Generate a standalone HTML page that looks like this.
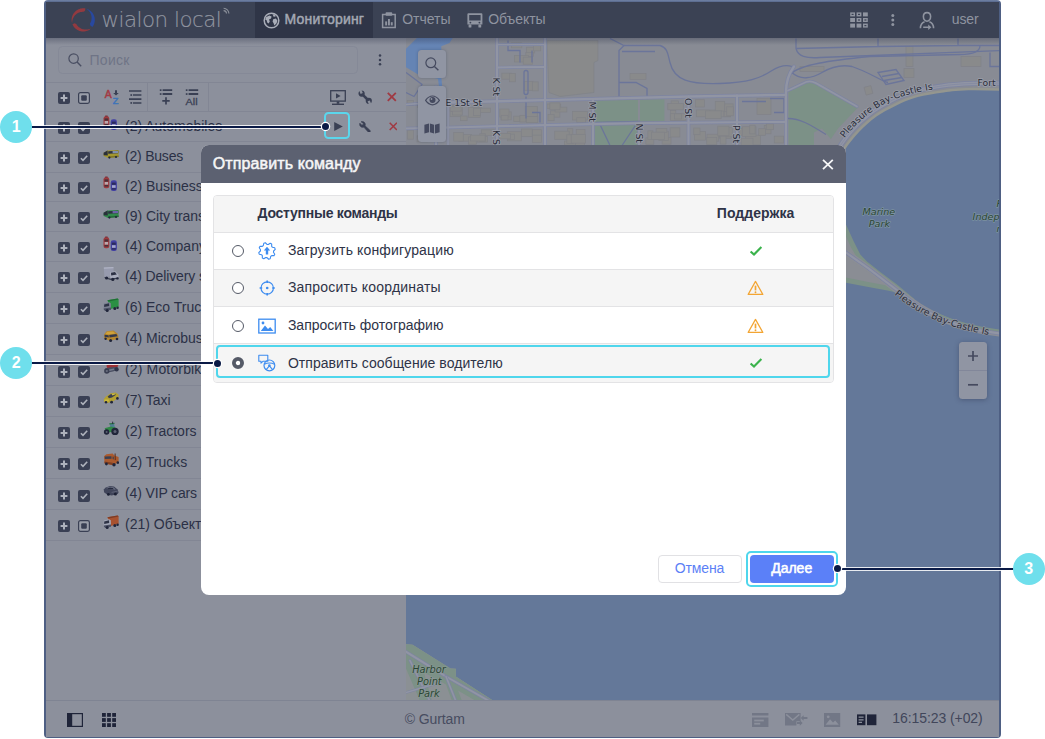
<!DOCTYPE html>
<html lang="ru">
<head>
<meta charset="utf-8">
<title>Отправить команду</title>
<style>
html,body{margin:0;padding:0;background:#fff;}
body{width:1045px;height:739px;position:relative;overflow:hidden;font-family:"Liberation Sans",Arial,sans-serif;font-size:14px;color:#2b3046;}
.abs{position:absolute;}
#win{position:absolute;left:44px;top:0;width:956.9px;height:738px;background:linear-gradient(#7183a6 0,#4e5f83 2.6px);border-radius:4px;overflow:hidden;}
#hdr{position:absolute;left:46px;top:2px;width:953.3px;height:35.5px;background:#3b4254;}
#tabact{position:absolute;left:254.5px;top:2px;width:118.5px;height:35.5px;background:#2f3547;}
.ht{position:absolute;top:10px;height:18px;line-height:18px;font-size:14px;color:#8f94a0;white-space:pre;}
#panel{position:absolute;left:46px;top:37.5px;width:360px;height:663px;background:#8c909c;}
.hl{position:absolute;left:46px;width:360px;height:1px;background:#828694;}
.vl{position:absolute;width:1px;background:#828694;}
.row{position:absolute;left:46px;width:360px;}
.rt{position:absolute;left:125px;height:18px;line-height:18px;font-size:14px;color:#2b3046;white-space:pre;}
#status{position:absolute;left:46px;top:700.5px;width:953.3px;height:36px;background:#8c909c;}
#statusline{position:absolute;left:46px;top:700px;width:953.3px;height:1px;background:#7f8493;}
#map{position:absolute;left:406px;top:37.5px;}
.mbtn{position:absolute;background:#9095a3;border-radius:3.5px;box-shadow:0 0 3px rgba(40,48,75,.35);}
#dlg{position:absolute;left:201px;top:145px;width:645px;height:449.5px;background:#fff;border-radius:8px;overflow:hidden;}
#dlgh{position:absolute;left:0;top:0;width:645px;height:37.7px;background:#5c6171;}
#tbl{position:absolute;left:11.9px;top:50.2px;width:620.9px;height:187.4px;border:1px solid #e3e3e5;border-radius:4px;box-sizing:border-box;background:#fff;overflow:hidden;}
.tr{position:absolute;left:0;width:619px;}
.ct{position:absolute;height:18px;line-height:18px;font-size:14px;color:#2e3347;white-space:pre;}
.radio{position:absolute;width:12px;height:12px;box-sizing:border-box;border:1.5px solid #555a67;border-radius:50%;background:#fff;}
.callc{position:absolute;width:32px;height:32px;border-radius:50%;background:#6fdfec;color:#fff;font-weight:bold;font-size:16px;line-height:32px;text-align:center;}
.calll{position:absolute;height:2.4px;background:#0a1a46;box-shadow:0 0 0 1px rgba(255,255,255,.85);}
.calld{position:absolute;width:7px;height:7px;border-radius:50%;background:#0a1a46;box-shadow:0 0 0 1.2px #fff;}
</style>
</head>
<body>
<div id="win"></div>
<div id="hdr"></div>
<div id="tabact"></div>
<svg class="abs" style="left:68px;top:4px" width="32" height="32" viewBox="68 4 32 32">
<path d="M72.11,23.29 L71.86,22.33 L71.69,21.35 L71.61,20.36 L71.61,19.36 L71.70,18.37 L71.87,17.39 L72.13,16.43 L72.47,15.49 L72.89,14.59 L73.38,13.72 L73.95,12.91 L74.58,12.14 L75.28,11.43 L76.03,10.78 L76.84,10.20 L77.69,9.69 L78.59,9.26 L79.52,8.90 L80.48,8.62 L81.45,8.43 L82.44,8.32 L83.44,8.30 L84.43,8.37 L85.41,8.51 L84.97,10.81 L84.10,11.43 L83.36,11.87 L82.67,11.85 L81.98,11.88 L81.28,11.96 L80.58,12.08 L79.89,12.25 L79.20,12.47 L78.51,12.75 L77.84,13.08 L77.18,13.46 L76.54,13.90 L75.92,14.40 L75.33,14.95 L74.77,15.56 L74.25,16.23 L73.78,16.95 L73.36,17.72 L72.99,18.54 L72.68,19.41 L72.44,20.32 L72.26,21.28 L72.16,22.26 L72.11,23.29Z" fill="#923a40"/>
<path d="M86.59,8.81 L87.47,9.12 L88.33,9.50 L89.15,9.94 L89.94,10.46 L90.68,11.03 L91.37,11.66 L92.00,12.35 L92.58,13.08 L93.10,13.86 L93.56,14.68 L93.95,15.53 L94.26,16.41 L94.51,17.32 L94.68,18.24 L94.78,19.17 L94.80,20.10 L94.74,21.04 L94.61,21.96 L94.41,22.88 L94.13,23.77 L93.79,24.64 L93.37,25.48 L92.89,26.28 L92.34,27.04 L90.34,25.48 L90.10,24.44 L89.98,23.62 L90.29,23.07 L90.57,22.51 L90.82,21.92 L91.04,21.32 L91.23,20.69 L91.37,20.04 L91.48,19.38 L91.55,18.69 L91.57,17.99 L91.54,17.27 L91.46,16.54 L91.33,15.80 L91.14,15.06 L90.89,14.31 L90.58,13.57 L90.21,12.83 L89.77,12.10 L89.27,11.40 L88.69,10.71 L88.05,10.06 L87.35,9.43 L86.59,8.81Z" fill="#28489f"/>
<path d="M91.26,28.24 L90.55,28.87 L89.80,29.44 L89.00,29.95 L88.16,30.38 L87.29,30.75 L86.40,31.05 L85.48,31.27 L84.55,31.42 L83.60,31.49 L82.66,31.49 L81.72,31.41 L80.79,31.25 L79.87,31.01 L78.98,30.71 L78.11,30.33 L77.28,29.88 L76.49,29.36 L75.74,28.79 L75.05,28.15 L74.40,27.46 L73.82,26.72 L73.29,25.93 L72.83,25.11 L72.44,24.25 L74.61,23.37 L75.59,23.72 L76.34,24.07 L76.68,24.64 L77.05,25.19 L77.45,25.71 L77.90,26.22 L78.38,26.70 L78.90,27.16 L79.45,27.59 L80.04,27.98 L80.67,28.34 L81.34,28.67 L82.04,28.95 L82.77,29.19 L83.53,29.37 L84.32,29.51 L85.14,29.58 L85.98,29.59 L86.84,29.54 L87.71,29.42 L88.59,29.23 L89.47,28.97 L90.36,28.63 L91.26,28.24Z" fill="#923a40"/>
</svg>
<div class="abs" style="left:101.5px;top:6.4px;height:28px;line-height:28px;-webkit-text-stroke:0.14px #9195a0;font-family:'DejaVu Sans Light','DejaVu Sans','Liberation Sans',sans-serif;font-weight:200;font-size:21.4px;letter-spacing:-0.5px;color:#9195a0;white-space:pre;">wialon local</div>
<svg class="abs" style="left:222px;top:6px" width="10" height="10" viewBox="0 0 10 10"><path d="M1.6 2.2 A5.4 5.4 0 0 1 6.9 7.6" fill="none" stroke="#8a8f99" stroke-width="1.1"/><path d="M1.6 4.6 A3 3 0 0 1 4.5 7.6" fill="none" stroke="#8a8f99" stroke-width="1.1"/></svg>
<svg class="abs" style="left:262.5px;top:11.5px" width="17" height="17" viewBox="0 0 17 17"><circle cx="8.5" cy="8.5" r="7.3" fill="none" stroke="#a9adb8" stroke-width="1.5"/><path d="M3 5.2 L6.2 3.4 L8.6 4.4 L8 6.6 L6 7.4 L6.8 9.4 L5.6 11.6 L4.2 10.4 L3.6 8.2 L2.2 7.4Z M10.2 7.2 L12.8 6.6 L14.4 8.4 L13.6 11.2 L11.4 13.4 L10.6 11.2 L9.6 9.4Z M9.6 2.2 L12.2 2.8 L12.6 4.4 L10.6 4.8Z" fill="#a9adb8"/></svg>
<div class="ht" style="left:284.6px;-webkit-text-stroke:0.45px #a4a8b3;color:#a4a8b3;letter-spacing:0.19px">Мониторинг</div>
<svg class="abs" style="left:381px;top:11px" width="16" height="18" viewBox="0 0 16 18"><path d="M1.6 3.4 H14.2 V16.6 H1.6Z" fill="none" stroke="#8f94a0" stroke-width="1.5"/><rect x="4.6" y="1.2" width="6.6" height="3.6" rx="0.8" fill="#8f94a0"/><rect x="4.2" y="10.4" width="1.9" height="4" fill="#8f94a0"/><rect x="7" y="8" width="1.9" height="6.4" fill="#8f94a0"/><rect x="9.8" y="11.2" width="1.9" height="3.2" fill="#8f94a0"/></svg>
<div class="ht" style="left:402.2px;">Отчеты</div>
<svg class="abs" style="left:466px;top:11px" width="18" height="18" viewBox="0 0 18 18"><path d="M2.4 2.2 H15.4 Q16.4 2.2 16.4 3.2 V13.6 H1.4 V3.2 Q1.4 2.2 2.4 2.2Z M3.2 4 V9.6 H14.6 V4Z" fill="#8f94a0" fill-rule="evenodd"/><rect x="2.6" y="13.4" width="2.8" height="3.2" rx="0.6" fill="#8f94a0"/><rect x="12.4" y="13.4" width="2.8" height="3.2" rx="0.6" fill="#8f94a0"/><circle cx="4.4" cy="11.6" r="0.9" fill="#3b4254"/><circle cx="13.4" cy="11.6" r="0.9" fill="#3b4254"/></svg>
<div class="ht" style="left:488.2px;letter-spacing:-0.06px">Объекты</div>
<svg class="abs" style="left:850px;top:12px" width="18" height="16" viewBox="0 0 18 16"><rect x="0.9" y="1.1" width="3.4" height="2.6" fill="none" stroke="#8f94a0" stroke-width="1.4"/><rect x="7.3" y="1.1" width="3.4" height="2.6" fill="none" stroke="#8f94a0" stroke-width="1.4"/><rect x="13.0" y="0.4" width="4.8" height="4" fill="#8f94a0"/><rect x="0.2" y="6.0" width="4.8" height="4" fill="#8f94a0"/><rect x="7.3" y="6.7" width="3.4" height="2.6" fill="none" stroke="#8f94a0" stroke-width="1.4"/><rect x="13.7" y="6.7" width="3.4" height="2.6" fill="none" stroke="#8f94a0" stroke-width="1.4"/><rect x="0.2" y="11.6" width="4.8" height="4" fill="#8f94a0"/><rect x="6.6" y="11.6" width="4.8" height="4" fill="#8f94a0"/><rect x="13.7" y="12.3" width="3.4" height="2.6" fill="none" stroke="#8f94a0" stroke-width="1.4"/></svg>
<svg class="abs" style="left:890px;top:13px" width="6" height="14" viewBox="0 0 6 14"><circle cx="2.8" cy="2.6" r="1.5" fill="#8f94a0"/><circle cx="2.8" cy="7" r="1.5" fill="#8f94a0"/><circle cx="2.8" cy="11.4" r="1.5" fill="#8f94a0"/></svg>
<svg class="abs" style="left:918px;top:11px" width="18" height="20" viewBox="0 0 18 20"><path d="M9 1.6 C11.4 1.6 12.6 3.4 12.6 5.6 C12.6 8.2 11 10.2 9 10.2 C7 10.2 5.4 8.2 5.4 5.6 C5.4 3.4 6.6 1.6 9 1.6Z" fill="none" stroke="#8f94a0" stroke-width="1.6"/><path d="M2.4 17.2 C2.6 13.6 4.2 11.6 6.6 10.8 M11.4 10.8 C13.8 11.6 15.4 13.6 15.6 17.2" fill="none" stroke="#8f94a0" stroke-width="1.6"/><path d="M5.2 15.6 H10.2 V13.6 L13.4 16.3 L10.2 19 V17 H5.2Z" fill="#8f94a0"/></svg>
<div class="ht" style="left:951.8px;letter-spacing:-0.13px">user</div>
<div id="panel"></div>
<div class="abs" style="left:58px;top:46px;width:299.5px;height:27.6px;box-sizing:border-box;border:1px solid #858997;border-radius:4.5px;background:#8c909c"></div>
<svg class="abs" style="left:67px;top:52px" width="16" height="16" viewBox="0 0 16 16"><circle cx="6.6" cy="6.6" r="4.7" fill="none" stroke="#494e62" stroke-width="1.2"/><path d="M10.1 10.1L14.2 14.2" stroke="#494e62" stroke-width="1.4"/></svg>
<div class="abs" style="left:89.5px;top:51px;height:18px;line-height:18px;font-size:14px;color:#6f7486;letter-spacing:0.28px;white-space:pre">Поиск</div>
<svg class="abs" style="left:377px;top:53px" width="6" height="14" viewBox="0 0 6 14"><circle cx="3" cy="2.6" r="1.25" fill="#3a4054"/><circle cx="3" cy="6.9" r="1.25" fill="#3a4054"/><circle cx="3" cy="11.2" r="1.25" fill="#3a4054"/></svg>
<div class="hl" style="top:82px"></div>
<div class="vl" style="left:147.2px;top:82.5px;height:28.5px"></div>
<div class="vl" style="left:208.3px;top:82.5px;height:28.5px"></div>
<svg class="abs" style="left:58px;top:92px" width="12" height="12" viewBox="0 0 12 12"><rect width="12" height="12" rx="2" fill="#3a4054"/><path d="M6 2.6V9.4M2.6 6H9.4" stroke="#aeb2bc" stroke-width="2"/></svg>
<svg class="abs" style="left:78px;top:92px" width="12" height="12" viewBox="0 0 12 12"><rect x="0.6" y="0.6" width="10.8" height="10.8" rx="1.8" fill="#9a9ea9" stroke="#3a4054" stroke-width="1.2"/><rect x="3.2" y="3.2" width="5.6" height="5.6" rx="1" fill="#3a4054"/></svg>
<svg class="abs" style="left:104px;top:88px" width="16" height="18" viewBox="0 0 16 18"><text x="0.8" y="9.7" font-family="Liberation Sans, sans-serif" font-size="10.4" fill="#a33a44" stroke="#a33a44" stroke-width="0.5">A</text><text x="8.8" y="15.8" font-family="Liberation Sans, sans-serif" font-size="9.2" fill="#3f74b8" stroke="#3f74b8" stroke-width="0.5">Z</text><path d="M11 2.2H13V5H14.8L12 7.4L9.2 5H11Z" fill="#3a4054"/></svg>
<svg class="abs" style="left:128px;top:89px" width="14" height="16" viewBox="0 0 14 16"><path d="M1 2.2H13.4M5 6.6H13.4M1 11H13.4M5 15.2H13.4" stroke="#3a4054" stroke-width="1.7" transform="scale(1,0.92)"/><rect x="2.4" y="5.2" width="1.7" height="1.7" fill="#3a4054"/><rect x="2.4" y="13.1" width="1.7" height="1.7" fill="#3a4054"/></svg>
<svg class="abs" style="left:159px;top:88px" width="14" height="18" viewBox="0 0 14 18"><path d="M3.6 2.2H13.2M3.6 6H13.2" stroke="#3a4054" stroke-width="1.8"/><rect x="0.8" y="1.3" width="1.7" height="1.7" fill="#3a4054"/><rect x="0.8" y="5.2" width="1.7" height="1.7" fill="#3a4054"/><path d="M7 9.2V16.6M3.3 12.9H10.7" stroke="#3a4054" stroke-width="1.7"/></svg>
<svg class="abs" style="left:185px;top:88px" width="14" height="18" viewBox="0 0 14 18"><path d="M3.6 2.2H13.2M3.6 6H13.2" stroke="#3a4054" stroke-width="1.8"/><rect x="0.8" y="1.3" width="1.7" height="1.7" fill="#3a4054"/><rect x="0.8" y="5.2" width="1.7" height="1.7" fill="#3a4054"/><text x="0.6" y="16.5" font-family="Liberation Sans, sans-serif" font-size="9.8" fill="#3a4054" stroke="#3a4054" stroke-width="0.3" textLength="12" lengthAdjust="spacingAndGlyphs">All</text></svg>
<svg class="abs" style="left:329px;top:89px" width="18" height="17" viewBox="0 0 18 17"><rect x="1.7" y="1.7" width="14.6" height="10.4" fill="none" stroke="#3a4054" stroke-width="1.3"/><path d="M7 4.2V9.6L11.6 6.9Z" fill="#3a4054"/><path d="M9 12.4V14.8" stroke="#3a4054" stroke-width="2.6"/><path d="M3 15.3H15" stroke="#3a4054" stroke-width="1.4"/></svg>
<svg class="abs" style="left:357.6px;top:89.7px" width="14.4" height="14.4" viewBox="0 0 14 14"><path d="M4 4L10 10" stroke="#3a4054" stroke-width="2.5"/><circle cx="3.5" cy="3.5" r="3" fill="#3a4054"/><circle cx="10.5" cy="10.5" r="3" fill="#3a4054"/><path d="M3.6 3.4L1.9 -0.6" stroke="#8c909c" stroke-width="2.3"/><path d="M10.4 10.6L12.1 14.6" stroke="#8c909c" stroke-width="2.3"/></svg>
<svg class="abs" style="left:387px;top:92.1px" width="9.6" height="9.6" viewBox="0 0 10 10"><path d="M0.8 0.8L9.2 9.2M9.2 0.8L0.8 9.2" stroke="#a03a43" stroke-width="1.88"/></svg>
<div class="hl" style="top:111.1px"></div>
<svg class="abs" style="left:58px;top:121.8px" width="12" height="12" viewBox="0 0 12 12"><rect width="12" height="12" rx="2" fill="#3a4054"/><path d="M6 2.6V9.4M2.6 6H9.4" stroke="#aeb2bc" stroke-width="2"/></svg>
<svg class="abs" style="left:78px;top:121.8px" width="12" height="12" viewBox="0 0 12 12"><rect width="12" height="12" rx="2" fill="#3a4054"/><path d="M2.9 6.2L5 8.3L9.2 3.8" fill="none" stroke="#aeb2bc" stroke-width="1.6"/></svg>
<svg class="abs" style="left:103px;top:115.4px" width="16" height="16" viewBox="0 0 16 16"><rect x="0.5" y="1.3" width="5.8" height="11" rx="2.2" fill="#9e3a3f"/><rect x="1.5" y="3.4" width="3.8" height="2.2" fill="#4a3038"/><rect x="1.7" y="6" width="3.4" height="2.6" fill="#b9a9ae"/><rect x="1.5" y="9" width="3.8" height="1.6" fill="#4a3038"/><rect x="2" y="0.6" width="2.8" height="1.2" rx="0.5" fill="#7d2f36"/><rect x="7.7" y="4.3" width="6.2" height="10.8" rx="2.4" fill="#4240a2"/><rect x="8.8" y="6.6" width="4" height="2.2" fill="#2b2c5c"/><rect x="9" y="9.2" width="3.6" height="2.6" fill="#a6a8cc"/><rect x="8.8" y="12.2" width="4" height="1.4" fill="#2b2c5c"/></svg>
<div class="rt" style="top:116.7px;letter-spacing:0px">(2) Automobiles</div>
<div class="hl" style="top:140.8px"></div>
<svg class="abs" style="left:58px;top:151.9px" width="12" height="12" viewBox="0 0 12 12"><rect width="12" height="12" rx="2" fill="#3a4054"/><path d="M6 2.6V9.4M2.6 6H9.4" stroke="#aeb2bc" stroke-width="2"/></svg>
<svg class="abs" style="left:78px;top:151.9px" width="12" height="12" viewBox="0 0 12 12"><rect width="12" height="12" rx="2" fill="#3a4054"/><path d="M2.9 6.2L5 8.3L9.2 3.8" fill="none" stroke="#aeb2bc" stroke-width="1.6"/></svg>
<svg class="abs" style="left:103px;top:145.5px" width="16" height="16" viewBox="0 0 16 16"><path d="M0.6 6.8 L4.6 4.4 L15.6 4 L15.6 11 L5 12 L0.6 10Z" fill="#a3972f"/><path d="M0.6 6.8 L4.6 4.6 L4.8 9.6 L0.6 9.2Z" fill="#2a2f3a"/><path d="M5.2 5.2 L15.2 4.8 L15.2 7.2 L5.2 7.8Z" fill="#2e3342"/><path d="M9.6 5.1 L15 4.9 L15 6.9 L9.6 7.3Z" fill="#7f8fae"/><path d="M5 10.4 L15.6 9.6 L15.6 11 L5 12Z" fill="#7d7426"/><circle cx="6.4" cy="11.6" r="1.1" fill="#20253a"/><circle cx="13" cy="11" r="1.1" fill="#20253a"/></svg>
<div class="rt" style="top:146.8px;letter-spacing:-0.21px">(2) Buses</div>
<div class="hl" style="top:171.5px"></div>
<svg class="abs" style="left:58px;top:182.2px" width="12" height="12" viewBox="0 0 12 12"><rect width="12" height="12" rx="2" fill="#3a4054"/><path d="M6 2.6V9.4M2.6 6H9.4" stroke="#aeb2bc" stroke-width="2"/></svg>
<svg class="abs" style="left:78px;top:182.2px" width="12" height="12" viewBox="0 0 12 12"><rect width="12" height="12" rx="2" fill="#3a4054"/><path d="M2.9 6.2L5 8.3L9.2 3.8" fill="none" stroke="#aeb2bc" stroke-width="1.6"/></svg>
<svg class="abs" style="left:103px;top:175.8px" width="16" height="16" viewBox="0 0 16 16"><rect x="0.5" y="1.3" width="5.8" height="11" rx="2.2" fill="#9e3a3f"/><rect x="1.5" y="3.4" width="3.8" height="2.2" fill="#4a3038"/><rect x="1.7" y="6" width="3.4" height="2.6" fill="#b9a9ae"/><rect x="1.5" y="9" width="3.8" height="1.6" fill="#4a3038"/><rect x="2" y="0.6" width="2.8" height="1.2" rx="0.5" fill="#7d2f36"/><rect x="7.7" y="4.3" width="6.2" height="10.8" rx="2.4" fill="#4240a2"/><rect x="8.8" y="6.6" width="4" height="2.2" fill="#2b2c5c"/><rect x="9" y="9.2" width="3.6" height="2.6" fill="#a6a8cc"/><rect x="8.8" y="12.2" width="4" height="1.4" fill="#2b2c5c"/></svg>
<div class="rt" style="top:177.1px;letter-spacing:0px">(2) Business cars</div>
<div class="hl" style="top:201.3px"></div>
<svg class="abs" style="left:58px;top:212.2px" width="12" height="12" viewBox="0 0 12 12"><rect width="12" height="12" rx="2" fill="#3a4054"/><path d="M6 2.6V9.4M2.6 6H9.4" stroke="#aeb2bc" stroke-width="2"/></svg>
<svg class="abs" style="left:78px;top:212.2px" width="12" height="12" viewBox="0 0 12 12"><rect width="12" height="12" rx="2" fill="#3a4054"/><path d="M2.9 6.2L5 8.3L9.2 3.8" fill="none" stroke="#aeb2bc" stroke-width="1.6"/></svg>
<svg class="abs" style="left:103px;top:205.8px" width="16" height="16" viewBox="0 0 16 16"><path d="M0.6 6.8 L4.6 4.4 L15.6 4 L15.6 11 L5 12 L0.6 10Z" fill="#32894c"/><path d="M0.6 6.8 L4.6 4.6 L4.8 9.6 L0.6 9.2Z" fill="#2a2f3a"/><path d="M5.2 5.2 L15.2 4.8 L15.2 7.2 L5.2 7.8Z" fill="#2e3342"/><path d="M9.6 5.1 L15 4.9 L15 6.9 L9.6 7.3Z" fill="#6b62a8"/><path d="M5 10.4 L15.6 9.6 L15.6 11 L5 12Z" fill="#246a3a"/><circle cx="6.4" cy="11.6" r="1.1" fill="#20253a"/><circle cx="13" cy="11" r="1.1" fill="#20253a"/></svg>
<div class="rt" style="top:207.1px;letter-spacing:0px">(9) City transport</div>
<div class="hl" style="top:231.4px"></div>
<svg class="abs" style="left:58px;top:242.1px" width="12" height="12" viewBox="0 0 12 12"><rect width="12" height="12" rx="2" fill="#3a4054"/><path d="M6 2.6V9.4M2.6 6H9.4" stroke="#aeb2bc" stroke-width="2"/></svg>
<svg class="abs" style="left:78px;top:242.1px" width="12" height="12" viewBox="0 0 12 12"><rect width="12" height="12" rx="2" fill="#3a4054"/><path d="M2.9 6.2L5 8.3L9.2 3.8" fill="none" stroke="#aeb2bc" stroke-width="1.6"/></svg>
<svg class="abs" style="left:103px;top:235.7px" width="16" height="16" viewBox="0 0 16 16"><rect x="0.5" y="1.3" width="5.8" height="11" rx="2.2" fill="#9e3a3f"/><rect x="1.5" y="3.4" width="3.8" height="2.2" fill="#4a3038"/><rect x="1.7" y="6" width="3.4" height="2.6" fill="#b9a9ae"/><rect x="1.5" y="9" width="3.8" height="1.6" fill="#4a3038"/><rect x="2" y="0.6" width="2.8" height="1.2" rx="0.5" fill="#7d2f36"/><rect x="7.7" y="4.3" width="6.2" height="10.8" rx="2.4" fill="#4240a2"/><rect x="8.8" y="6.6" width="4" height="2.2" fill="#2b2c5c"/><rect x="9" y="9.2" width="3.6" height="2.6" fill="#a6a8cc"/><rect x="8.8" y="12.2" width="4" height="1.4" fill="#2b2c5c"/></svg>
<div class="rt" style="top:237.0px;letter-spacing:0px">(4) Company cars</div>
<div class="hl" style="top:261.2px"></div>
<svg class="abs" style="left:58px;top:272.1px" width="12" height="12" viewBox="0 0 12 12"><rect width="12" height="12" rx="2" fill="#3a4054"/><path d="M6 2.6V9.4M2.6 6H9.4" stroke="#aeb2bc" stroke-width="2"/></svg>
<svg class="abs" style="left:78px;top:272.1px" width="12" height="12" viewBox="0 0 12 12"><rect width="12" height="12" rx="2" fill="#3a4054"/><path d="M2.9 6.2L5 8.3L9.2 3.8" fill="none" stroke="#aeb2bc" stroke-width="1.6"/></svg>
<svg class="abs" style="left:103px;top:265.7px" width="16" height="16" viewBox="0 0 16 16"><path d="M0.8 1.4 L10.4 1 L11 9.6 L1.4 11.6Z" fill="#979bae"/><path d="M0.8 1.4 L10.4 1 L10.5 2.2 L0.9 2.8Z" fill="#b0b4c4"/><path d="M7 6.2 L12.4 5.2 L15.4 8.4 L15.6 12.4 L7.4 13.8Z" fill="#a9adbd"/><path d="M8 6.8 L12 6 L13.8 8.4 L8.2 9.4Z" fill="#2c3144"/><path d="M1.4 11.2 L7.4 12.6 L15.6 11.4 L15.6 12.6 L7.4 14 L1.4 12Z" fill="#3a3f52"/><circle cx="3.6" cy="12" r="1.6" fill="#20253a"/><circle cx="9.8" cy="13.4" r="1.6" fill="#20253a"/><circle cx="14.4" cy="12.4" r="1.2" fill="#20253a"/></svg>
<div class="rt" style="top:267.0px;letter-spacing:-0.12px">(4) Delivery service</div>
<div class="hl" style="top:291.5px"></div>
<svg class="abs" style="left:58px;top:303.1px" width="12" height="12" viewBox="0 0 12 12"><rect width="12" height="12" rx="2" fill="#3a4054"/><path d="M6 2.6V9.4M2.6 6H9.4" stroke="#aeb2bc" stroke-width="2"/></svg>
<svg class="abs" style="left:78px;top:303.1px" width="12" height="12" viewBox="0 0 12 12"><rect width="12" height="12" rx="2" fill="#3a4054"/><path d="M2.9 6.2L5 8.3L9.2 3.8" fill="none" stroke="#aeb2bc" stroke-width="1.6"/></svg>
<svg class="abs" style="left:103px;top:296.6px" width="16" height="16" viewBox="0 0 16 16"><path d="M4.4 3.2 L14.6 1.4 L15.6 2.4 L15.6 10 L7.6 12Z" fill="#2b9044"/><path d="M4.4 3.2 L14.6 1.4 L15.6 2.4 L6 4.4Z" fill="#1f6e34"/><path d="M0.8 6.6 L6.2 5.2 L7.8 6.2 L8 12.8 L2.2 14 L0.6 12.4Z" fill="#7b8092"/><path d="M1.2 7.4 L6 6.2 L6.2 9 L1.2 10Z" fill="#2e3346"/><path d="M0.8 11.6 L8 10.6 L8 12.8 L2.2 14 L0.8 12.6Z" fill="#4a4f62"/><circle cx="4.2" cy="13.4" r="1.5" fill="#20253a"/><circle cx="11.8" cy="11.6" r="1.5" fill="#20253a"/><circle cx="14.6" cy="10.8" r="1.2" fill="#20253a"/></svg>
<div class="rt" style="top:297.9px;letter-spacing:0px">(6) Eco Trucks</div>
<div class="hl" style="top:323.0px"></div>
<svg class="abs" style="left:58px;top:334.4px" width="12" height="12" viewBox="0 0 12 12"><rect width="12" height="12" rx="2" fill="#3a4054"/><path d="M6 2.6V9.4M2.6 6H9.4" stroke="#aeb2bc" stroke-width="2"/></svg>
<svg class="abs" style="left:78px;top:334.4px" width="12" height="12" viewBox="0 0 12 12"><rect width="12" height="12" rx="2" fill="#3a4054"/><path d="M2.9 6.2L5 8.3L9.2 3.8" fill="none" stroke="#aeb2bc" stroke-width="1.6"/></svg>
<svg class="abs" style="left:103px;top:328.0px" width="16" height="16" viewBox="0 0 16 16"><path d="M1 6.4 L3.6 3.2 L10.6 2.6 L14.4 5.4 L15.4 8.6 L15.2 11 L6.6 12.8 L1.2 10.6Z" fill="#b4862f"/><path d="M2.4 6 L4.2 3.8 L10 3.4 L12.6 5.6 L6 6.6Z" fill="#cfa23c"/><path d="M6.2 7 L13.4 6 L14.6 8.2 L6.6 9.4Z" fill="#33384a"/><path d="M1.6 6.8 L5.6 7.2 L5.8 9.4 L1.6 8.8Z" fill="#33384a"/><circle cx="7.6" cy="12.6" r="1.5" fill="#20253a"/><circle cx="14" cy="11" r="1.3" fill="#20253a"/><circle cx="2.6" cy="10.8" r="1.2" fill="#20253a"/></svg>
<div class="rt" style="top:329.3px;letter-spacing:0px">(4) Microbuses</div>
<div class="hl" style="top:354.2px"></div>
<svg class="abs" style="left:58px;top:365.6px" width="12" height="12" viewBox="0 0 12 12"><rect width="12" height="12" rx="2" fill="#3a4054"/><path d="M6 2.6V9.4M2.6 6H9.4" stroke="#aeb2bc" stroke-width="2"/></svg>
<svg class="abs" style="left:78px;top:365.6px" width="12" height="12" viewBox="0 0 12 12"><rect width="12" height="12" rx="2" fill="#3a4054"/><path d="M2.9 6.2L5 8.3L9.2 3.8" fill="none" stroke="#aeb2bc" stroke-width="1.6"/></svg>
<svg class="abs" style="left:103px;top:361.4px" width="16" height="16" viewBox="0 0 16 16"><path d="M3.4 4.6 L7 2.6 L10 4 L12.4 2.2 L15.8 3 L14.4 6.2 L8 7.6 L4 6.8Z" fill="#9c3136"/><path d="M2 7.6 L8 6.2 L14.4 6 L15.4 8.4 L10 10.6 L5 11.6Z" fill="#4a4f62"/><circle cx="3.8" cy="10" r="2.7" fill="#3a3f52"/><circle cx="3.8" cy="10" r="1.1" fill="#6a6f80"/><circle cx="13.6" cy="8.4" r="2.1" fill="#30354a"/><path d="M6 8.6 L11 7.4 L11.4 8.8 L6.6 10Z" fill="#767b8b"/></svg>
<div class="rt" style="top:359.8px;letter-spacing:0.15px">(2) Motorbikes</div>
<div class="hl" style="top:385.4px"></div>
<svg class="abs" style="left:58px;top:396.4px" width="12" height="12" viewBox="0 0 12 12"><rect width="12" height="12" rx="2" fill="#3a4054"/><path d="M6 2.6V9.4M2.6 6H9.4" stroke="#aeb2bc" stroke-width="2"/></svg>
<svg class="abs" style="left:78px;top:396.4px" width="12" height="12" viewBox="0 0 12 12"><rect width="12" height="12" rx="2" fill="#3a4054"/><path d="M2.9 6.2L5 8.3L9.2 3.8" fill="none" stroke="#aeb2bc" stroke-width="1.6"/></svg>
<svg class="abs" style="left:103px;top:390.0px" width="16" height="16" viewBox="0 0 16 16"><path d="M0.8 9 L3 6.4 L7.6 3.2 L12.6 2.4 L15.6 4.4 L15.4 8 L9.8 11.6 L4.4 13 L1 11.8Z" fill="#b3a032"/><path d="M4.6 6.6 L8 4 L12 3.4 L13 4.8 L9 7.6 L6 8.2Z" fill="#3a3f50"/><path d="M8.4 3.8 L11.8 3.2 L12.6 4.2 L9.4 5.4Z" fill="#d2c040"/><path d="M1.4 9.4 L6 9.6 L5.6 11.6 L1.4 11Z" fill="#cbb93c"/><circle cx="3" cy="12.2" r="1.2" fill="#20253a"/><circle cx="8.6" cy="12.2" r="1.4" fill="#20253a"/><circle cx="14.4" cy="8.4" r="1.3" fill="#20253a"/></svg>
<div class="rt" style="top:391.3px;letter-spacing:0px">(7) Taxi</div>
<div class="hl" style="top:415.8px"></div>
<svg class="abs" style="left:58px;top:427.2px" width="12" height="12" viewBox="0 0 12 12"><rect width="12" height="12" rx="2" fill="#3a4054"/><path d="M6 2.6V9.4M2.6 6H9.4" stroke="#aeb2bc" stroke-width="2"/></svg>
<svg class="abs" style="left:78px;top:427.2px" width="12" height="12" viewBox="0 0 12 12"><rect width="12" height="12" rx="2" fill="#3a4054"/><path d="M2.9 6.2L5 8.3L9.2 3.8" fill="none" stroke="#aeb2bc" stroke-width="1.6"/></svg>
<svg class="abs" style="left:103px;top:420.8px" width="16" height="16" viewBox="0 0 16 16"><path d="M6.6 2.8 L11 2.4 L12 7 L8 8Z" fill="#4f7f95"/><path d="M6.2 2.2 L11.4 1.8 L11.6 3 L6.4 3.4Z" fill="#2f7a46"/><path d="M1.6 7.2 L7.8 5.6 L12.4 6.6 L13.6 10.4 L4 11.6Z" fill="#318847"/><circle cx="3.6" cy="11" r="2.7" fill="#20253a"/><circle cx="3.6" cy="11" r="1" fill="#5c6174"/><circle cx="12" cy="10.4" r="3.7" fill="#20253a"/><circle cx="12" cy="10.4" r="1.5" fill="#5c6174"/><rect x="9.2" y="0.6" width="0.9" height="2.4" fill="#2a2f40"/></svg>
<div class="rt" style="top:422.1px;letter-spacing:0px">(2) Tractors</div>
<div class="hl" style="top:447.0px"></div>
<svg class="abs" style="left:58px;top:458.4px" width="12" height="12" viewBox="0 0 12 12"><rect width="12" height="12" rx="2" fill="#3a4054"/><path d="M6 2.6V9.4M2.6 6H9.4" stroke="#aeb2bc" stroke-width="2"/></svg>
<svg class="abs" style="left:78px;top:458.4px" width="12" height="12" viewBox="0 0 12 12"><rect width="12" height="12" rx="2" fill="#3a4054"/><path d="M2.9 6.2L5 8.3L9.2 3.8" fill="none" stroke="#aeb2bc" stroke-width="1.6"/></svg>
<svg class="abs" style="left:103px;top:452.0px" width="16" height="16" viewBox="0 0 16 16"><path d="M1 4.2 L3.4 2.2 L9.6 1.6 L11.4 3.4 L15.6 5 L15.6 10.6 L9.6 13 L1.6 11.4Z" fill="#ab5a2d"/><path d="M1.8 4.6 L8.4 4.2 L8.6 6.8 L1.8 7Z" fill="#3a4052"/><path d="M11.6 1.6 L12.6 1.4 L12.8 8 L11.8 8.2Z" fill="#5a2e20"/><path d="M9.6 4.4 L10.8 4.8 L10.8 7.4 L9.6 7Z" fill="#3a4052"/><path d="M1.4 9.6 L9.6 10.8 L9.6 13 L1.6 11.4Z" fill="#7e3f22"/><circle cx="3.4" cy="12" r="1.4" fill="#20253a"/><circle cx="11" cy="12.8" r="1.7" fill="#20253a"/><circle cx="14.8" cy="10.6" r="1.3" fill="#20253a"/></svg>
<div class="rt" style="top:453.3px;letter-spacing:0px">(2) Trucks</div>
<div class="hl" style="top:478.2px"></div>
<svg class="abs" style="left:58px;top:489.5px" width="12" height="12" viewBox="0 0 12 12"><rect width="12" height="12" rx="2" fill="#3a4054"/><path d="M6 2.6V9.4M2.6 6H9.4" stroke="#aeb2bc" stroke-width="2"/></svg>
<svg class="abs" style="left:78px;top:489.5px" width="12" height="12" viewBox="0 0 12 12"><rect width="12" height="12" rx="2" fill="#3a4054"/><path d="M2.9 6.2L5 8.3L9.2 3.8" fill="none" stroke="#aeb2bc" stroke-width="1.6"/></svg>
<svg class="abs" style="left:103px;top:483.1px" width="16" height="16" viewBox="0 0 16 16"><path d="M0.8 6.6 L2.6 4.4 L7 3 L11 3.6 L14.6 6.6 L15.6 9.2 L14.8 11 L8.6 12.6 L4 11.6 L1 9.2Z" fill="#40455a"/><path d="M3.2 5 L7 3.8 L10.6 4.4 L12.6 6.4 L7 6.6Z" fill="#73788b"/><path d="M4 5.6 L7 4.6 L9.8 5 L11 6.2 L7 6.4Z" fill="#262b3e"/><circle cx="5.4" cy="11.4" r="1.4" fill="#1b2033"/><circle cx="12.4" cy="11" r="1.5" fill="#1b2033"/><path d="M8.6 9.4 L14.6 8.2" stroke="#6a6f82" stroke-width="0.7"/></svg>
<div class="rt" style="top:484.4px;letter-spacing:-0.14px">(4) VIP cars</div>
<div class="hl" style="top:509.1px"></div>
<svg class="abs" style="left:58px;top:520.2px" width="12" height="12" viewBox="0 0 12 12"><rect width="12" height="12" rx="2" fill="#3a4054"/><path d="M6 2.6V9.4M2.6 6H9.4" stroke="#aeb2bc" stroke-width="2"/></svg>
<svg class="abs" style="left:78px;top:520.2px" width="12" height="12" viewBox="0 0 12 12"><rect x="0.6" y="0.6" width="10.8" height="10.8" rx="1.8" fill="#9a9ea9" stroke="#3a4054" stroke-width="1.2"/><rect x="3.2" y="3.2" width="5.6" height="5.6" rx="1" fill="#3a4054"/></svg>
<svg class="abs" style="left:103px;top:513.9px" width="16" height="16" viewBox="0 0 16 16"><path d="M4.4 3.2 L14.6 1.4 L15.6 2.4 L15.6 10 L7.6 12Z" fill="#a8522f"/><path d="M4.4 3.2 L14.6 1.4 L15.6 2.4 L6 4.4Z" fill="#7e3c25"/><path d="M0.8 6.6 L6.2 5.2 L7.8 6.2 L8 12.8 L2.2 14 L0.6 12.4Z" fill="#a2a6b6"/><path d="M1.2 7.4 L6 6.2 L6.2 9 L1.2 10Z" fill="#2e3346"/><path d="M0.8 11.6 L8 10.6 L8 12.8 L2.2 14 L0.8 12.6Z" fill="#4a4f62"/><circle cx="4.2" cy="13.4" r="1.5" fill="#20253a"/><circle cx="11.8" cy="11.6" r="1.5" fill="#20253a"/><circle cx="14.6" cy="10.8" r="1.2" fill="#20253a"/></svg>
<div class="rt" style="top:515.1px;letter-spacing:0px">(21) Объекты</div>
<div class="hl" style="top:539.8px"></div>
<div class="abs" style="left:324.3px;top:112.4px;width:25.4px;height:27px;box-sizing:border-box;border:2px solid #5ad6ec;border-radius:4.5px;background:#8d919d"></div>
<svg class="abs" style="left:333px;top:121px" width="11" height="11" viewBox="0 0 11 11"><path d="M1.2 1V10L9.8 5.5Z" fill="#3a4054"/></svg>
<svg class="abs" style="left:359.4px;top:120.6px" width="11.8" height="11.8" viewBox="0 0 12 12"><path d="M2.2 0.8 C3.8 0.2 5.6 0.9 6.2 2.6 C6.5 3.4 6.4 4.2 6.1 4.9 L11 9.3 C11.6 9.9 11.6 10.7 11.1 11.2 C10.6 11.7 9.8 11.7 9.3 11.1 L4.9 6.2 C3.4 6.8 1.6 6.2 0.9 4.6 C0.6 3.8 0.6 3 0.9 2.3 L2.8 4.2 L4.2 3.8 L4.5 2.5 Z" fill="#3a4054" stroke="#3a4054" stroke-width="0.7" stroke-linejoin="round"/></svg>
<svg class="abs" style="left:388.6px;top:122.1px" width="8.6" height="8.6" viewBox="0 0 10 10"><path d="M0.8 0.8L9.2 9.2M9.2 0.8L0.8 9.2" stroke="#a03a43" stroke-width="1.74"/></svg>
<svg id="map" width="593.3" height="663" viewBox="406 37.5 593.3 663" font-family="'DejaVu Sans','Liberation Sans',sans-serif">
<rect x="406" y="37.5" width="594" height="663" fill="#888b94"/>
<path d="M1000,90.3 L973.8,89.8 C960,90 950,91 943.7,92 C933,93.5 925,94.8 917.8,96.6 C909,99.2 902,102 896.3,104.9 C888,109 882,112 876.9,115.7 C870,120.8 864,126 859.7,130.7 C853,138 848,144 844.6,149.9 L820,190 L700,330 L406,560 L406,643.7 L412.6,644.3 L450.5,667.9 L455.8,668.3 L455.8,675.9 L493.7,700.5 L1000,700.5Z" fill="#647899" stroke="#94968f" stroke-width="5" stroke-linejoin="round"/>
<path d="M1000,90.3 L973.8,89.8 C960,90 950,91 943.7,92 C933,93.5 925,94.8 917.8,96.6 C909,99.2 902,102 896.3,104.9 C888,109 882,112 876.9,115.7 C870,120.8 864,126 859.7,130.7 C853,138 848,144 844.6,149.9 L820,190 L700,330 L406,560 L406,643.7 L412.6,644.3 L450.5,667.9 L455.8,668.3 L455.8,675.9 L493.7,700.5 L1000,700.5Z" fill="#647899"/>
<path d="M406,48.2 L417,37.5 L452.7,37.5 L449.5,42.5 L441.3,45.7 L441.3,76.6 L442.1,85.5 L438.9,85.5 L438,78.2 L418.2,74.1 L406,66.8Z" fill="#6584b4"/>
<path d="M595,100 L638,99.2 L638,122.5 L640,122.4 L640,99.2 L664.4,98.8 L664.4,120.6 L640,121.6 L640,145 L595,145Z" fill="#7c9187"/>
<path d="M788.6,91 L806,82.5 L813,82.5 L857.5,107.5 L838,128 L826,146 L788.6,146Z" fill="#7c9187"/>
<path d="M814,132 L822,128 L832,140 L828,146 L814,146Z" fill="#888b94"/>
<g fill="#898a8b" stroke="#808288" stroke-width="0.7"><rect x="473.0" y="104.1" width="8.6" height="4.9"/><rect x="450.1" y="110.0" width="10.9" height="6.2"/><rect x="450.9" y="104.2" width="5.4" height="6.6"/><rect x="452.6" y="105.5" width="9.7" height="9.0"/><rect x="468.3" y="107.1" width="11.9" height="9.7"/><rect x="474.8" y="107.6" width="15.7" height="4.3"/><rect x="460.5" y="115.5" width="6.6" height="4.7"/><rect x="473.6" y="107.7" width="7.0" height="7.5"/><rect x="450.1" y="106.2" width="11.0" height="4.4"/><rect x="458.8" y="134.1" width="12.5" height="6.6"/><rect x="477.4" y="135.8" width="10.0" height="5.8"/><rect x="468.6" y="136.4" width="7.7" height="7.4"/><rect x="481.3" y="129.3" width="13.0" height="5.7"/><rect x="453.7" y="132.1" width="9.6" height="8.5"/><rect x="479.8" y="133.2" width="5.4" height="8.0"/><rect x="470.5" y="134.6" width="14.6" height="5.9"/><rect x="526.4" y="115.5" width="11.4" height="6.7"/><rect x="501.0" y="111.4" width="10.2" height="8.0"/><rect x="525.2" y="105.9" width="12.1" height="10.0"/><rect x="499.8" y="108.5" width="9.2" height="8.0"/><rect x="501.2" y="114.8" width="6.8" height="4.7"/><rect x="513.7" y="115.6" width="6.4" height="5.5"/><rect x="519.9" y="114.8" width="5.9" height="6.7"/><rect x="507.3" y="131.2" width="14.0" height="9.2"/><rect x="532.6" y="129.2" width="8.9" height="9.3"/><rect x="507.6" y="133.6" width="6.9" height="5.4"/><rect x="499.1" y="132.8" width="11.5" height="5.6"/><rect x="532.3" y="134.6" width="9.1" height="7.4"/><rect x="521.5" y="128.5" width="10.7" height="7.7"/><rect x="572.5" y="110.8" width="14.9" height="8.7"/><rect x="550.6" y="110.3" width="9.3" height="6.4"/><rect x="555.0" y="103.7" width="5.7" height="4.4"/><rect x="547.0" y="103.5" width="8.7" height="4.3"/><rect x="548.0" y="114.0" width="6.1" height="6.2"/><rect x="555.1" y="106.6" width="11.8" height="4.9"/><rect x="576.7" y="117.2" width="9.0" height="4.7"/><rect x="549.9" y="102.4" width="10.1" height="6.9"/><rect x="576.2" y="129.0" width="8.8" height="5.6"/><rect x="567.5" y="128.2" width="5.3" height="9.7"/><rect x="564.4" y="140.5" width="11.0" height="4.2"/><rect x="554.7" y="130.6" width="14.5" height="8.2"/><rect x="566.8" y="134.3" width="6.8" height="8.6"/><rect x="575.7" y="139.5" width="8.6" height="5.3"/><rect x="571.2" y="133.8" width="14.4" height="8.8"/><rect x="671.1" y="100.4" width="7.5" height="7.1"/><rect x="670.5" y="109.9" width="5.3" height="5.7"/><rect x="670.3" y="113.2" width="15.5" height="6.7"/><rect x="667.8" y="103.1" width="15.5" height="6.2"/><rect x="674.4" y="113.3" width="7.2" height="5.2"/><rect x="709.8" y="109.5" width="14.2" height="6.9"/><rect x="724.7" y="108.4" width="5.9" height="8.0"/><rect x="696.3" y="109.4" width="13.3" height="6.9"/><rect x="724.4" y="103.4" width="8.7" height="8.8"/><rect x="715.3" y="100.8" width="9.4" height="9.7"/><rect x="724.1" y="111.2" width="6.4" height="4.9"/><rect x="726.7" y="106.3" width="6.6" height="9.0"/><rect x="695.5" y="99.2" width="8.9" height="7.3"/><rect x="705.4" y="110.3" width="15.7" height="7.9"/><rect x="670.1" y="127.3" width="9.8" height="9.2"/><rect x="650.0" y="133.4" width="7.8" height="5.8"/><rect x="645.9" y="137.3" width="7.9" height="6.5"/><rect x="662.1" y="137.0" width="8.9" height="6.7"/><rect x="658.7" y="130.6" width="9.6" height="9.5"/><rect x="656.1" y="127.9" width="10.8" height="4.1"/><rect x="647.9" y="130.3" width="5.0" height="8.8"/><rect x="651.4" y="131.6" width="13.0" height="7.3"/><rect x="694.4" y="130.9" width="11.1" height="8.7"/><rect x="718.2" y="131.8" width="7.7" height="5.7"/><rect x="720.0" y="129.5" width="11.2" height="8.6"/><rect x="707.0" y="133.7" width="11.7" height="7.0"/><rect x="706.8" y="137.0" width="10.0" height="7.2"/><rect x="719.6" y="127.0" width="12.7" height="9.3"/><rect x="717.8" y="125.6" width="11.2" height="9.7"/><rect x="693.7" y="127.5" width="6.3" height="6.7"/><rect x="720.2" y="135.6" width="5.8" height="8.0"/><rect x="764.3" y="125.0" width="6.7" height="8.3"/><rect x="745.7" y="134.6" width="14.7" height="9.8"/><rect x="774.3" y="135.6" width="9.4" height="6.9"/><rect x="758.7" y="128.2" width="6.8" height="6.6"/><rect x="766.3" y="123.3" width="7.2" height="5.9"/><rect x="739.6" y="128.1" width="11.1" height="6.6"/><rect x="741.1" y="137.7" width="11.9" height="7.1"/><rect x="742.3" y="126.2" width="13.7" height="9.8"/><rect x="749.7" y="124.7" width="5.4" height="8.7"/><rect x="422.7" y="101.8" width="9.6" height="9.5"/><rect x="419.3" y="121.9" width="6.6" height="9.5"/><rect x="422.5" y="111.5" width="6.0" height="4.3"/><rect x="421.4" y="126.4" width="5.8" height="9.6"/><rect x="407.6" y="129.6" width="5.9" height="9.1"/><rect x="417.1" y="135.4" width="10.0" height="6.0"/><rect x="417.6" y="102.0" width="7.9" height="4.8"/><rect x="407.2" y="100.1" width="6.2" height="5.0"/><rect x="526.3" y="46.7" width="8.4" height="5.8"/><rect x="511.3" y="42.3" width="10.5" height="5.1"/><rect x="525.8" y="51.9" width="7.8" height="4.1"/><rect x="533.6" y="43.6" width="7.1" height="6.8"/><rect x="514.4" y="54.9" width="14.0" height="6.6"/><rect x="523.2" y="56.7" width="9.3" height="7.0"/><rect x="524.2" y="80.8" width="8.8" height="9.0"/><rect x="501.8" y="72.6" width="9.5" height="6.1"/><rect x="509.5" y="72.9" width="5.8" height="8.4"/><rect x="532.3" y="81.4" width="5.9" height="9.0"/><path d="M547,40 L598,40 L598,60 L594,62 L594,92 L560,96 L549,92Z"/><rect x="757" y="98" width="14" height="16"/><rect x="630" y="73" width="16" height="6"/><rect x="640" y="86" width="10" height="8" opacity="0"/><rect x="800" y="66" width="24" height="5"/><rect x="906" y="46" width="7" height="20"/><rect x="904" y="68" width="10" height="9"/><rect x="961" y="56" width="20" height="10"/><rect x="865" y="86" width="7" height="8" transform="rotate(-15 868 90)"/></g>
<g fill="none" stroke="#6b759a" stroke-width="1.3"><path d="M610,38 L624,45 L660,45 C668,47 668,55 670,62 C674,80 690,84 720,83 C748,82 760,78 772,70 C780,65 786,64 792,66"/><path d="M624,45 L619,50 L619,96 M619,82 L636,82 L647,88 L647,96 M622,51 L655,51"/><path d="M796,38 L796,48 C798,56 806,58 820,57 L1000,50 M796,48 L878,46 L878,38 M878,46 L958,45 L958,38 M958,45 L1000,45"/><path d="M790,74 C800,64 830,60 870,56 L960,54 C975,54 980,50 980,45"/><path d="M792,72 C800,80 812,78 822,72 C832,66 842,64 852,66 C870,72 880,80 888,82"/><path d="M878,72 L896,69 L904,80 L886,84Z M882,76 L899,73 M884,80 L902,77"/><path d="M990,52 L990,66 L1000,66"/><path d="M788,118 C800,118 810,124 826,134"/><path d="M508,40 L508,50 L520,50 L520,62 M532,50 L532,62"/><rect x="524" y="70" width="4" height="24" rx="2"/><path d="M526,96 L526,118 M532,112 L540,112 L540,122"/><path d="M406,72 L422,84 L414,96 L406,92 M406,104 L436,104 L440,88"/><path d="M596,122 L640,121 M600,124 L610,145 M636,124 L622,145"/><path d="M742,101 L766,101 M770,98 L784,98 L784,112 L774,112"/></g>
<path d="M447,102 L545,99.6 L690,96 L786,94.4" fill="none" stroke="#7d84a1" stroke-width="3.8" stroke-linecap="round" stroke-linejoin="round"/>
<path d="M447,127 L545,124.6 L640,122.6 L786,121.3" fill="none" stroke="#7d84a1" stroke-width="3.6" stroke-linecap="round" stroke-linejoin="round"/>
<path d="M497,38 L497,146" fill="none" stroke="#7d84a1" stroke-width="3.6" stroke-linecap="round" stroke-linejoin="round"/>
<path d="M545,38 L545,146" fill="none" stroke="#7d84a1" stroke-width="3.6" stroke-linecap="round" stroke-linejoin="round"/>
<path d="M497,67 L545,66.4" fill="none" stroke="#7d84a1" stroke-width="3.2" stroke-linecap="round" stroke-linejoin="round"/>
<path d="M497,44 L545,44" fill="none" stroke="#7d84a1" stroke-width="2.8" stroke-linecap="round" stroke-linejoin="round"/>
<path d="M593,99 L593,146" fill="none" stroke="#7d84a1" stroke-width="3.6" stroke-linecap="round" stroke-linejoin="round"/>
<path d="M639,122.6 L639,146" fill="none" stroke="#7d84a1" stroke-width="3.6" stroke-linecap="round" stroke-linejoin="round"/>
<path d="M688.5,96 L688.5,146" fill="none" stroke="#7d84a1" stroke-width="3.6" stroke-linecap="round" stroke-linejoin="round"/>
<path d="M737,95 L737,146" fill="none" stroke="#7d84a1" stroke-width="3.6" stroke-linecap="round" stroke-linejoin="round"/>
<path d="M786,146 L786,92 C786,82 788,74 794,66" fill="none" stroke="#7d84a1" stroke-width="3.8" stroke-linecap="round" stroke-linejoin="round"/>
<path d="M788,90 L806,81.5 C810,80 812,80.4 816,82.6 L857,106" fill="none" stroke="#7d84a1" stroke-width="3.2" stroke-linecap="round" stroke-linejoin="round"/>
<path d="M406,128 L447,127" fill="none" stroke="#7d84a1" stroke-width="3.4" stroke-linecap="round" stroke-linejoin="round"/>
<path d="M406,104 L420,103" fill="none" stroke="#7d84a1" stroke-width="2.8" stroke-linecap="round" stroke-linejoin="round"/>
<path d="M436,86 L436,146" fill="none" stroke="#7d84a1" stroke-width="3.6" stroke-linecap="round" stroke-linejoin="round"/>
<path d="M448,146 L448,102" fill="none" stroke="#7d84a1" stroke-width="2.4" stroke-linecap="round" stroke-linejoin="round"/>
<path d="M447,102 L545,99.6 L690,96 L786,94.4" fill="none" stroke="#9195a4" stroke-width="2.4" stroke-linecap="round" stroke-linejoin="round"/>
<path d="M447,127 L545,124.6 L640,122.6 L786,121.3" fill="none" stroke="#9195a4" stroke-width="2.2" stroke-linecap="round" stroke-linejoin="round"/>
<path d="M497,38 L497,146" fill="none" stroke="#9195a4" stroke-width="2.2" stroke-linecap="round" stroke-linejoin="round"/>
<path d="M545,38 L545,146" fill="none" stroke="#9195a4" stroke-width="2.2" stroke-linecap="round" stroke-linejoin="round"/>
<path d="M497,67 L545,66.4" fill="none" stroke="#9195a4" stroke-width="2" stroke-linecap="round" stroke-linejoin="round"/>
<path d="M497,44 L545,44" fill="none" stroke="#9195a4" stroke-width="1.6" stroke-linecap="round" stroke-linejoin="round"/>
<path d="M593,99 L593,146" fill="none" stroke="#9195a4" stroke-width="2.2" stroke-linecap="round" stroke-linejoin="round"/>
<path d="M639,122.6 L639,146" fill="none" stroke="#9195a4" stroke-width="2.2" stroke-linecap="round" stroke-linejoin="round"/>
<path d="M688.5,96 L688.5,146" fill="none" stroke="#9195a4" stroke-width="2.2" stroke-linecap="round" stroke-linejoin="round"/>
<path d="M737,95 L737,146" fill="none" stroke="#9195a4" stroke-width="2.2" stroke-linecap="round" stroke-linejoin="round"/>
<path d="M786,146 L786,92 C786,82 788,74 794,66" fill="none" stroke="#9195a4" stroke-width="2.4" stroke-linecap="round" stroke-linejoin="round"/>
<path d="M788,90 L806,81.5 C810,80 812,80.4 816,82.6 L857,106" fill="none" stroke="#9195a4" stroke-width="1.8" stroke-linecap="round" stroke-linejoin="round"/>
<path d="M406,128 L447,127" fill="none" stroke="#9195a4" stroke-width="2" stroke-linecap="round" stroke-linejoin="round"/>
<path d="M406,104 L420,103" fill="none" stroke="#9195a4" stroke-width="1.6" stroke-linecap="round" stroke-linejoin="round"/>
<path d="M436,86 L436,146" fill="none" stroke="#9195a4" stroke-width="2.2" stroke-linecap="round" stroke-linejoin="round"/>
<path d="M448,146 L448,102" fill="none" stroke="#9195a4" stroke-width="1.4" stroke-linecap="round" stroke-linejoin="round"/>
<path d="M1000,82.6 L973.8,83 C960,83.4 950,84.2 942.6,85.4 C931,87 923,88.6 915.6,90.6 C906,93.4 899,96.2 893.2,99.2 C885,103.4 878.4,107 873,111 C866,116.4 859.6,121.8 855,126.6 C848.4,133.8 843.4,140 839.6,146.4" fill="none" stroke="#7d84a1" stroke-width="5.2" stroke-linecap="round" stroke-linejoin="round"/>
<path d="M1000,82.6 L973.8,83 C960,83.4 950,84.2 942.6,85.4 C931,87 923,88.6 915.6,90.6 C906,93.4 899,96.2 893.2,99.2 C885,103.4 878.4,107 873,111 C866,116.4 859.6,121.8 855,126.6 C848.4,133.8 843.4,140 839.6,146.4" fill="none" stroke="#9195a4" stroke-width="3.4" stroke-linecap="round" stroke-linejoin="round"/>
<path d="M1000,82.6 L973.8,83 C960,83.4 950,84.2 942.6,85.4 C931,87 923,88.6 915.6,90.6 C906,93.4 899,96.2 893.2,99.2 C885,103.4 878.4,107 873,111 C866,116.4 859.6,121.8 855,126.6 C848.4,133.8 843.4,140 839.6,146.4" fill="none" stroke="#7d84a1" stroke-width="0.6"/>
<path d="M846,224 L853.5,240.6 L860.3,254.1 L867,260.9 L880.6,271.7 L897,284 L915,299 L907,297 L894,291.6 L888.7,290.3 L867,286.3 L846,282.2 L840,282 L840,224Z" fill="#7c9187"/>
<path d="M846,236 L851,247 L857.6,258 L865,265 L878,275 L888,283 L884,284.6 L867,281.3 L846,277 L840,277 L840,236Z" fill="#8a8d94"/>
<path d="M840,248 L846.1,252.1 L868.4,267.8 L896.8,289.5 C905,296 915,303.6 925.2,309.6 C934,314.6 944,319.6 953.6,322.6 C963,326 972,328.6 982,330.3 L1000,333" fill="none" stroke="#8b8e95" stroke-width="6.4"/>
<path d="M935,314.6 C950,322 970,328 1000,332" fill="none" stroke="#7c9187" stroke-width="2.2" transform="translate(1.2,-1.6)"/>
<path d="M840,248 L846.1,252.1 L868.4,267.8 L896.8,289.5 C905,296 915,303.6 925.2,309.6 C934,314.6 944,319.6 953.6,322.6 C963,326 972,328.6 982,330.3 L1000,333" fill="none" stroke="#7d84a1" stroke-width="3.8" stroke-linecap="round" stroke-linejoin="round"/>
<path d="M840,248 L846.1,252.1 L868.4,267.8 L896.8,289.5 C905,296 915,303.6 925.2,309.6 C934,314.6 944,319.6 953.6,322.6 C963,326 972,328.6 982,330.3 L1000,333" fill="none" stroke="#9195a4" stroke-width="2.2" stroke-linecap="round" stroke-linejoin="round"/>
<path d="M406,643.7 L412.6,644.3 L450.5,667.9 L455.8,668.3 L455.8,675.9 L493.7,700.5 L406,700.5Z" fill="#7c9187"/>
<path d="M406,668 L420,700.5 L406,700.5Z M424,672 L446,684 L452,700.5 L432,700.5Z M458,690 L476,700.5 L462,700.5Z" fill="#8b9094"/>
<path d="M404,650 L446,676 L490,701" fill="none" stroke="#7d84a1" stroke-width="3.4" stroke-linecap="round" stroke-linejoin="round"/>
<path d="M404,650 L446,676 L490,701" fill="none" stroke="#9195a4" stroke-width="2" stroke-linecap="round" stroke-linejoin="round"/>
<path d="M410,660 L430,701" fill="none" stroke="#7d84a1" stroke-width="3" stroke-linecap="round" stroke-linejoin="round"/>
<path d="M410,660 L430,701" fill="none" stroke="#9195a4" stroke-width="1.6" stroke-linecap="round" stroke-linejoin="round"/>
<path d="M446,676 L456,701" fill="none" stroke="#7d84a1" stroke-width="3" stroke-linecap="round" stroke-linejoin="round"/>
<path d="M446,676 L456,701" fill="none" stroke="#9195a4" stroke-width="1.6" stroke-linecap="round" stroke-linejoin="round"/>
<path d="M406,692 L440,682" fill="none" stroke="#7d84a1" stroke-width="2.6" stroke-linecap="round" stroke-linejoin="round"/>
<path d="M406,692 L440,682" fill="none" stroke="#9195a4" stroke-width="1.4" stroke-linecap="round" stroke-linejoin="round"/>
<text x="445.5" y="105.8" font-size="9.3" fill="#2a2d3a" stroke="#9a9ea9" stroke-width="1.6" stroke-linejoin="round" paint-order="stroke" >E 1St St</text>
<text x="493.4" y="77" font-size="9.3" fill="#2a2d3a" stroke="#9a9ea9" stroke-width="1.6" stroke-linejoin="round" paint-order="stroke"  transform="rotate(90 493.4 77)">K St</text>
<text x="493.4" y="129.5" font-size="9.3" fill="#2a2d3a" stroke="#9a9ea9" stroke-width="1.6" stroke-linejoin="round" paint-order="stroke"  transform="rotate(90 493.4 129.5)">K St</text>
<text x="589.4" y="101" font-size="9.3" fill="#2a2d3a" stroke="#9a9ea9" stroke-width="1.6" stroke-linejoin="round" paint-order="stroke"  transform="rotate(90 589.4 101)">M St</text>
<text x="635.5" y="123" font-size="9.3" fill="#2a2d3a" stroke="#9a9ea9" stroke-width="1.6" stroke-linejoin="round" paint-order="stroke"  transform="rotate(90 635.5 123)">N St</text>
<text x="685" y="97.5" font-size="9.3" fill="#2a2d3a" stroke="#9a9ea9" stroke-width="1.6" stroke-linejoin="round" paint-order="stroke"  transform="rotate(90 685 97.5)">O St</text>
<text x="733.2" y="124.5" font-size="9.3" fill="#2a2d3a" stroke="#9a9ea9" stroke-width="1.6" stroke-linejoin="round" paint-order="stroke"  transform="rotate(90 733.2 124.5)">P St</text>
<text x="977.5" y="85.4" font-size="9.3" fill="#2a2d3a" stroke="#9a9ea9" stroke-width="1.6" stroke-linejoin="round" paint-order="stroke" >Fort</text>
<path id="coastp" d="M843.4,139.3 C853.4,125.3 867.4,112.8 885.4,102.8 C903.4,93.8 925.4,89.2 951.4,87" fill="none"/>
<text font-size="9.4" fill="#2a2d3a" stroke="#9a9ea9" stroke-width="1.6" stroke-linejoin="round" paint-order="stroke"><textPath href="#coastp" startOffset="2">Pleasure Bay-Castle Is</textPath></text>
<path id="cwp" d="M893.5,293.5 C905,303 920,313 938,320.6 C956,328 975,332 1000,336.4" fill="none"/>
<text font-size="9.4" fill="#2a2d3a" stroke="#8e939e" stroke-width="1.4" stroke-linejoin="round" paint-order="stroke"><textPath href="#cwp" startOffset="1">Pleasure Bay-Castle Is</textPath></text>
<text x="878.9" y="215" font-size="9.6" font-style="italic" text-anchor="middle" fill="#2a4535" stroke="#7d93a0" stroke-width="1.3" stroke-linejoin="round" paint-order="stroke">Marine</text>
<text x="879.4" y="226.2" font-size="9.6" font-style="italic" text-anchor="middle" fill="#2a4535" stroke="#7d93a0" stroke-width="1.3" stroke-linejoin="round" paint-order="stroke">Park</text>
<text x="972.6" y="219.6" font-size="9.6" font-style="italic" text-anchor="start" fill="#2a4535" stroke="#7d93a0" stroke-width="1.3" stroke-linejoin="round" paint-order="stroke">Independence</text>
<text x="996.4" y="207" font-size="9.6" font-style="italic" text-anchor="start" fill="#2a4535" stroke="#7d93a0" stroke-width="1.3" stroke-linejoin="round" paint-order="stroke">Fort</text>
<text x="996.4" y="231.2" font-size="9.6" font-style="italic" text-anchor="start" fill="#2a4535" stroke="#7d93a0" stroke-width="1.3" stroke-linejoin="round" paint-order="stroke">r</text>
<text x="429" y="672.6" font-size="9.8" font-style="italic" text-anchor="middle" fill="#2a4535" stroke="#8a9b93" stroke-width="1.2" stroke-linejoin="round" paint-order="stroke">Harbor</text>
<text x="429.4" y="684.8" font-size="9.8" font-style="italic" text-anchor="middle" fill="#2a4535" stroke="#8a9b93" stroke-width="1.2" stroke-linejoin="round" paint-order="stroke">Point</text>
<text x="429" y="696.8" font-size="9.8" font-style="italic" text-anchor="middle" fill="#2a4535" stroke="#8a9b93" stroke-width="1.2" stroke-linejoin="round" paint-order="stroke">Park</text>
</svg>
<div class="mbtn" style="left:418px;top:50px;width:28px;height:27.8px"></div>
<svg class="abs" style="left:423px;top:55px" width="18" height="18" viewBox="0 0 18 18"><circle cx="7.8" cy="7.8" r="4.9" fill="none" stroke="#454a5f" stroke-width="1.2"/><path d="M11.4 11.4L15.4 15.2" stroke="#454a5f" stroke-width="1.4"/></svg>
<div class="mbtn" style="left:418px;top:85.8px;width:28px;height:56px"></div>
<svg class="abs" style="left:424.5px;top:95px" width="15" height="11" viewBox="0 0 15 11"><path d="M0.6 5.4 C2.8 2.2 5.2 1 7.5 1 C9.8 1 12.2 2.2 14.4 5.4 C12.2 8.6 9.8 9.8 7.5 9.8 C5.2 9.8 2.8 8.6 0.6 5.4Z" fill="none" stroke="#454a5f" stroke-width="1.15"/><circle cx="7.5" cy="5" r="3" fill="#454a5f"/><circle cx="6.5" cy="4" r="0.9" fill="#9095a3"/></svg>
<svg class="abs" style="left:424.2px;top:123.2px" width="16" height="11" viewBox="0 0 16 11"><path d="M0.4 1.8 L5 0.4 V9.2 L0.4 10.6Z M5.9 0.4 L10.1 1.8 V10.6 L5.9 9.2Z M11 1.8 L15.6 0.4 V9.2 L11 10.6Z" fill="#454a5f"/></svg>
<div class="mbtn" style="left:959px;top:342px;width:28px;height:57px;box-shadow:0 1px 5px rgba(40,48,75,.4)"></div>
<div class="abs" style="left:959px;top:369.8px;width:28px;height:1px;background:#82879a"></div>
<svg class="abs" style="left:966px;top:349px" width="14" height="14" viewBox="0 0 14 14"><path d="M7 2V12M2 7H12" stroke="#454a5f" stroke-width="1.7"/></svg>
<svg class="abs" style="left:966px;top:378px" width="14" height="14" viewBox="0 0 14 14"><path d="M2 6.8H12" stroke="#454a5f" stroke-width="1.7"/></svg>
<div class="abs" style="left:46px;top:37.5px;width:953.3px;height:7px;background:linear-gradient(rgba(32,38,62,.30),rgba(32,38,62,0))"></div>
<div id="status"></div><div id="statusline"></div>
<svg class="abs" style="left:67px;top:713px" width="16" height="14" viewBox="0 0 16 14"><rect x="0.6" y="0.6" width="14.8" height="12.8" fill="none" stroke="#1f2439" stroke-width="1.2"/><rect x="0.6" y="0.6" width="4.6" height="12.8" fill="#1f2439"/></svg>
<svg class="abs" style="left:102px;top:713px" width="14" height="14" viewBox="0 0 14 14"><rect x="0.0" y="0.0" width="3.8" height="3.8" fill="#1f2439"/><rect x="5.1" y="0.0" width="3.8" height="3.8" fill="#1f2439"/><rect x="10.2" y="0.0" width="3.8" height="3.8" fill="#1f2439"/><rect x="0.0" y="5.1" width="3.8" height="3.8" fill="#1f2439"/><rect x="5.1" y="5.1" width="3.8" height="3.8" fill="#1f2439"/><rect x="10.2" y="5.1" width="3.8" height="3.8" fill="#1f2439"/><rect x="0.0" y="10.2" width="3.8" height="3.8" fill="#1f2439"/><rect x="5.1" y="10.2" width="3.8" height="3.8" fill="#1f2439"/><rect x="10.2" y="10.2" width="3.8" height="3.8" fill="#1f2439"/></svg>
<div class="abs" style="left:404.7px;top:709.5px;height:18px;line-height:18px;font-size:14px;color:#474c60;letter-spacing:-0.11px;white-space:pre">© Gurtam</div>
<svg class="abs" style="left:752px;top:713px" width="17" height="14" viewBox="0 0 17 14"><path d="M0 0H16.4V14H0Z M0 2.6H16.4V4.4H0Z" fill="#727786" fill-rule="evenodd"/><rect x="2.2" y="6.6" width="9.6" height="1.8" fill="#8c909c"/><rect x="2.2" y="9.8" width="6" height="1.8" fill="#8c909c"/></svg>
<svg class="abs" style="left:784.6px;top:713px" width="23" height="14" viewBox="0 0 23 14"><path d="M0 0H15.6V8.2H11.4V12.6H0Z" fill="#727786"/><path d="M1.2 1.4L7.8 7L14.4 1.4" fill="none" stroke="#8c909c" stroke-width="1.4"/><path d="M15.8 5.6L18.6 2.8V4.6H22.4V6.6H18.6V8.4Z M17.6 10.6L14.8 13.4V11.6H12V9.6H14.8V7.8Z" fill="#727786" transform="translate(0,-0.6)"/></svg>
<svg class="abs" style="left:824px;top:713px" width="17" height="14" viewBox="0 0 17 14"><path d="M0 0H16.2V14H0Z" fill="#727786"/><path d="M1.6 11.8L6 6.2L9 9.6L11.2 7.6L14.8 11.8Z" fill="#8c909c"/><circle cx="4.2" cy="3.8" r="1.4" fill="#8c909c"/></svg>
<svg class="abs" style="left:857px;top:714px" width="20" height="12" viewBox="0 0 20 12"><rect x="0" y="0.4" width="8.4" height="10.8" fill="#1f2439"/><rect x="10" y="0.4" width="9.4" height="10.8" fill="#1f2439"/><path d="M1.6 3.2H6.6M1.6 5.8H6.6M1.6 8.4H5" stroke="#8c909c" stroke-width="1.2"/></svg>
<div class="abs" style="left:892.3px;top:709.2px;height:18px;line-height:18px;font-size:14px;color:#41465a;letter-spacing:-0.08px;white-space:pre">16:15:23 (+02)</div>
<div id="dlg"><div id="dlgh"></div>
<div class="abs" style="left:11.7px;top:9px;height:20px;line-height:20px;font-size:16px;-webkit-text-stroke:0.5px #f6f6f7;color:#f6f6f7;letter-spacing:0.12px;white-space:pre">Отправить команду</div>
<svg class="abs" style="left:620.6px;top:13.8px" width="12" height="11" viewBox="0 0 12 11"><path d="M1 0.8L10.8 10.2M10.8 0.8L1 10.2" stroke="#f6f6f7" stroke-width="1.8"/></svg>
<div id="tbl">
<div class="tr" style="top:0;height:35.7px;background:#f5f5f5;border-bottom:1px solid #e3e3e5"></div>
<div class="ct" style="left:43.6px;top:7.6px;font-weight:bold;letter-spacing:-0.25px">Доступные команды</div>
<div class="ct" style="left:502.9px;top:7.6px;font-weight:bold;letter-spacing:0.05px">Поддержка</div>
<div class="tr" style="top:36.7px;height:37.4px;background:#fff;border-bottom:1px solid #e3e3e5;box-sizing:border-box;"></div>
<div class="radio" style="left:17.9px;top:49.0px"></div>
<svg class="abs" style="left:44.2px;top:46.0px" width="18" height="18" viewBox="0 0 18 18"><path d="M16.76,12.21 L15.98,13.67 L13.67,13.67 L12.67,14.49 L12.21,16.76 L10.64,17.24 L9.00,15.60 L7.71,15.47 L5.79,16.76 L4.33,15.98 L4.33,13.67 L3.51,12.67 L1.24,12.21 L0.76,10.64 L2.40,9.00 L2.53,7.71 L1.24,5.79 L2.02,4.33 L4.33,4.33 L5.33,3.51 L5.79,1.24 L7.36,0.76 L9.00,2.40 L10.29,2.53 L12.21,1.24 L13.67,2.02 L13.67,4.33 L14.49,5.33 L16.76,5.79 L17.24,7.36 L15.60,9.00 L15.47,10.29Z" fill="none" stroke="#3d8cf0" stroke-width="1.1" stroke-linejoin="round"/><path d="M9 4.8L12.2 8.6H10.2V12.6H7.8V8.6H5.8Z" fill="#3d8cf0"/></svg>
<div class="ct" style="left:74px;top:45.2px;letter-spacing:0.14px">Загрузить конфигурацию</div>
<svg class="abs" style="left:535px;top:49.0px" width="14" height="12" viewBox="0 0 14 12"><path d="M1.6 6.4L5 9.6L12.4 2" fill="none" stroke="#3bb34c" stroke-width="2.1"/></svg>
<div class="tr" style="top:74.1px;height:36.4px;background:#f5f5f5;border-bottom:1px solid #e3e3e5;box-sizing:border-box;"></div>
<div class="radio" style="left:17.9px;top:85.9px"></div>
<svg class="abs" style="left:44.2px;top:82.9px" width="18" height="18" viewBox="0 0 18 18"><circle cx="9.2" cy="9" r="6.2" fill="none" stroke="#3d8cf0" stroke-width="1.2"/><circle cx="9.2" cy="9" r="1.3" fill="#3d8cf0"/><path d="M9.2 1.4V4M9.2 14V16.6M1.6 9H4.2M14.2 9H16.8" stroke="#3d8cf0" stroke-width="1.6"/></svg>
<div class="ct" style="left:74px;top:82.1px;letter-spacing:0.21px">Запросить координаты</div>
<svg class="abs" style="left:533.5px;top:83.9px" width="17" height="16" viewBox="0 0 17 16"><path d="M8.5 1.4L15.8 14.4H1.2Z" fill="none" stroke="#f3a533" stroke-width="1.2" stroke-linejoin="round"/><path d="M8.5 5.6V10.4" stroke="#f3a533" stroke-width="1.7"/><circle cx="8.5" cy="12.3" r="0.95" fill="#f3a533"/></svg>
<div class="tr" style="top:110.5px;height:37.7px;background:#fff;border-bottom:1px solid #e3e3e5;box-sizing:border-box;"></div>
<div class="radio" style="left:17.9px;top:123.4px"></div>
<svg class="abs" style="left:44.2px;top:120.4px" width="18" height="18" viewBox="0 0 18 18"><rect x="0.8" y="2.2" width="16.4" height="13.8" fill="none" stroke="#3d8cf0" stroke-width="1.3"/><path d="M2.8 14L7 8.6L10 12L12.2 10L15.4 14Z" fill="#3d8cf0"/><circle cx="5" cy="6" r="1.4" fill="#3d8cf0"/></svg>
<div class="ct" style="left:74px;top:119.6px;letter-spacing:0.01px">Запросить фотографию</div>
<svg class="abs" style="left:533.5px;top:121.4px" width="17" height="16" viewBox="0 0 17 16"><path d="M8.5 1.4L15.8 14.4H1.2Z" fill="none" stroke="#f3a533" stroke-width="1.2" stroke-linejoin="round"/><path d="M8.5 5.6V10.4" stroke="#f3a533" stroke-width="1.7"/><circle cx="8.5" cy="12.3" r="0.95" fill="#f3a533"/></svg>
<div class="tr" style="top:148.2px;height:37.2px;background:#f5f5f5;"></div>
<div class="abs" style="left:2.2px;top:149.2px;width:614.4px;height:33.1px;box-sizing:border-box;border:2px solid #4fd6ec;border-radius:4px;background:#f5f5f5"></div>
<svg class="abs" style="left:17.9px;top:161.2px" width="12" height="12" viewBox="0 0 12 12"><circle cx="6" cy="6" r="4.1" fill="#fff" stroke="#555a67" stroke-width="3.8"/></svg>
<svg class="abs" style="left:44.2px;top:158.2px" width="18" height="18" viewBox="0 0 18 18"><path d="M0.8 1.2H9.8V7.2H5.2L3 9.2V7.2H0.8Z" fill="none" stroke="#3d8cf0" stroke-width="1.1" stroke-linejoin="round"/><circle cx="11.4" cy="11.4" r="5.4" fill="none" stroke="#3d8cf0" stroke-width="1.2"/><path d="M6.4 10.2C9 8.6 13.8 8.6 16.4 10.2M11.4 11.8L8.2 15.6M11.4 11.8L14.6 15.6" fill="none" stroke="#3d8cf0" stroke-width="1.1"/><circle cx="11.4" cy="11.6" r="1.3" fill="#3d8cf0"/></svg>
<div class="ct" style="left:74px;top:157.4px;letter-spacing:0.05px">Отправить сообщение водителю</div>
<svg class="abs" style="left:535px;top:161.2px" width="14" height="12" viewBox="0 0 14 12"><path d="M1.6 6.4L5 9.6L12.4 2" fill="none" stroke="#3bb34c" stroke-width="2.1"/></svg>
</div>
<div class="abs" style="left:457.3px;top:410.3px;width:83.4px;height:27.4px;box-sizing:border-box;border:1px solid #e1e1e4;border-radius:4px;background:#fff"></div>
<div class="abs" style="left:473.7px;top:414.2px;height:18px;line-height:18px;font-size:14px;color:#5c7ff6;letter-spacing:-0.12px;white-space:pre">Отмена</div>
<div class="abs" style="left:545.3px;top:406px;width:91.3px;height:35.8px;box-sizing:border-box;border:2px solid #4fd6ec;border-radius:5px;background:#fff"></div>
<div class="abs" style="left:548.9px;top:409.7px;width:84.2px;height:28.3px;border-radius:4px;background:#5b80f8"></div>
<div class="abs" style="left:570.2px;top:414px;height:18px;line-height:18px;font-size:14px;-webkit-text-stroke:0.55px #fff;color:#fff;letter-spacing:0px;white-space:pre">Далее</div>
</div>
<div class="calll" style="left:30px;top:125.7px;width:295px"></div>
<div class="calld" style="left:321.5px;top:123.4px"></div>
<div class="callc" style="left:0.2px;top:110.9px">1</div>
<div class="calll" style="left:30px;top:361.8px;width:187px"></div>
<div class="calld" style="left:213.6px;top:359.5px"></div>
<div class="callc" style="left:0.2px;top:347px">2</div>
<div class="calll" style="left:838px;top:567.6px;width:178px"></div>
<div class="calld" style="left:834.4px;top:565.3px"></div>
<div class="callc" style="left:1012.8px;top:552.8px">3</div>
</body>
</html>
